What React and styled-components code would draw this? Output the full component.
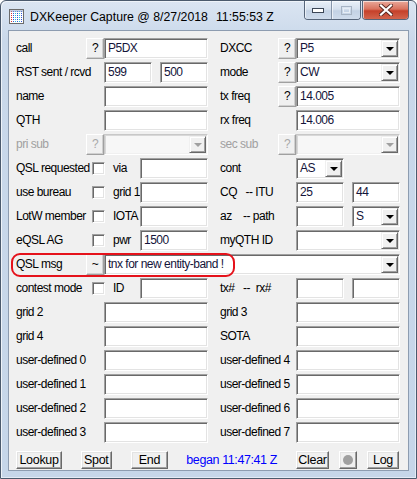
import React from "react";
import styled, { createGlobalStyle } from "styled-components";

const GlobalStyle = createGlobalStyle`
  body {
    margin: 0;
    background: #ffffff;
    font-family: "Liberation Sans", Arial, sans-serif;
  }
`;

const Window = styled.div`
  box-sizing: border-box;
  width: 417px;
  height: 479px;
  border: 1px solid #4b5a6d;
  border-radius: 6px 6px 0 0;
  background: linear-gradient(#dbe5f2, #c9d8ea 40px, #c6d6e9);
  box-shadow: inset 1px 1px #eef3f9, inset -1px -1px #e3ebf5;
  padding: 0 7px 7px;
  display: flex;
  flex-direction: column;
`;

const TitleBar = styled.div`
  height: 29px;
  display: flex;
  align-items: center;
  flex-shrink: 0;
`;

const TitleIcon = styled.svg`
  width: 15px;
  height: 15px;
  margin-left: 1px;
  margin-top: 1px;
  flex-shrink: 0;
`;

const TitleText = styled.span`
  margin-left: 6px;
  font-size: 12.3px;
  color: #000;
  margin-top: 2px;
  white-space: nowrap;
`;

const TitleTime = styled(TitleText)`
  margin-left: 8px;
`;

const Captions = styled.div`
  margin-left: auto;
  align-self: flex-start;
  display: flex;
  gap: 1px;
`;

const CapGroup = styled.div`
  display: flex;
  border: 1px solid #56657a;
  border-top: none;
  border-radius: 0 0 4px 4px;
  overflow: hidden;
`;

const CapBtn = styled.div`
  width: ${(p) => p.$w}px;
  height: 18px;
  display: flex;
  align-items: center;
  justify-content: center;
  background: ${(p) =>
    p.$close
      ? "linear-gradient(#e9a99b, #d9725e 45%, #c5402a 55%, #d2654d)"
      : "linear-gradient(#e9f0f8, #d6e1ee 45%, #c3d2e5 55%, #cfdcec)"};
  box-shadow: inset 1px 1px rgba(255, 255, 255, 0.6);
  & + & {
    border-left: 1px solid #8796aa;
  }
`;

const Client = styled.div`
  flex: 1;
  box-sizing: border-box;
  background: #f0f0f0;
  border: 1px solid #8d9cb0;
  display: flex;
  flex-direction: column;
  font-size: 12px;
  letter-spacing: -0.5px;
  color: #000;
`;

const Form = styled.div`
  display: grid;
  grid-template-columns: 199px 200px;
  grid-auto-rows: 24px;
  padding-top: 5px;
`;

const Cell = styled.div`
  display: flex;
  align-items: center;
  padding-left: ${(p) => p.$pad}px;
  position: relative;
  grid-column: ${(p) => (p.$wide ? "1 / -1" : "auto")};
`;

const Label = styled.span`
  width: ${(p) => p.$w}px;
  flex-shrink: 0;
  white-space: pre;
  color: ${(p) => (p.$disabled ? "#a0a0a0" : "#000")};
  margin-left: ${(p) => p.$ml || 0}px;
`;

const QButton = styled.div`
  box-sizing: border-box;
  width: 18px;
  height: 21px;
  flex-shrink: 0;
  display: flex;
  align-items: center;
  justify-content: center;
  background: #f0f0f0;
  border: 1px solid;
  border-color: #fff #a0a0a0 #a0a0a0 #fff;
  box-shadow: inset -1px -1px #d0d0d0;
  color: ${(p) => (p.$disabled ? "#a8a8a8" : "#000")};
  font-size: 12px;
`;

const Field = styled.div`
  box-sizing: border-box;
  width: ${(p) => p.$w || 104}px;
  height: 21px;
  flex-shrink: 0;
  margin-left: ${(p) => p.$ml || 0}px;
  display: flex;
  align-items: center;
  background: ${(p) => (p.$disabled ? "#f7f7f7" : "#fff")};
  border: 1px solid;
  border-color: ${(p) =>
    p.$disabled ? "#c8c8c8 #fff #fff #c8c8c8" : "#a0a0a0 #fff #fff #a0a0a0"};
  box-shadow: ${(p) =>
    p.$disabled
      ? "inset 1px 1px #d8d8d8, inset -1px -1px #f0f0f0"
      : "inset 1px 1px #696969, inset -1px -1px #e3e3e3"};
  padding: 0 1px 0 3px;
  color: #14143a;
  white-space: nowrap;
  overflow: hidden;
`;

const FieldText = styled.span`
  flex: 1;
`;

const DropBtn = styled.div`
  box-sizing: border-box;
  width: 17px;
  height: 17px;
  flex-shrink: 0;
  display: flex;
  align-items: center;
  justify-content: center;
  background: #f0f0f0;
  border: 1px solid;
  border-color: #f0f0f0 #696969 #696969 #f0f0f0;
  box-shadow: inset 1px 1px #fff, inset -1px -1px #a0a0a0;
  &::after {
    content: "";
    border-left: 4px solid transparent;
    border-right: 4px solid transparent;
    border-top: 4px solid ${(p) => (p.$disabled ? "#a0a0a0" : "#000")};
    margin-top: 1px;
  }
`;

const Check = styled.div`
  box-sizing: border-box;
  width: 13px;
  height: 13px;
  flex-shrink: 0;
  margin-left: 6px;
  background: #fff;
  border: 1px solid;
  border-color: #a0a0a0 #fff #fff #a0a0a0;
  box-shadow: inset 1px 1px #696969, inset -1px -1px #e3e3e3;
`;

const Gap = styled.div`
  width: ${(p) => p.$w}px;
  flex-shrink: 0;
`;

const Highlight = styled.div`
  position: absolute;
  left: 2px;
  top: 1px;
  width: 224px;
  height: 24px;
  box-sizing: border-box;
  border: 2.5px solid #e5121b;
  border-radius: 9px;
  pointer-events: none;
`;

const ButtonBar = styled.div`
  display: flex;
  align-items: center;
  margin-top: 7px;
  padding: 0 9px 0 7px;
  gap: 19px;
`;

const RightGroup = styled.div`
  margin-left: auto;
  display: flex;
  align-items: center;
  gap: 10px;
`;

const Button = styled.div`
  box-sizing: border-box;
  width: ${(p) => p.$w}px;
  height: 18px;
  display: flex;
  align-items: center;
  justify-content: center;
  background: #f0f0f0;
  border: 1px solid;
  border-color: #fff #696969 #696969 #fff;
  box-shadow: inset -1px -1px #a0a0a0, inset 1px 1px #e3e3e3;
  font-size: 12.5px;
  letter-spacing: -0.3px;
`;

const Dot = styled.div`
  width: 10px;
  height: 10px;
  border-radius: 50%;
  background: #a0a0a0;
`;

const Began = styled.span`
  color: #0000ff;
  font-size: 12.5px;
  letter-spacing: -0.4px;
  margin-left: -1px;
  white-space: nowrap;
`;

const Combo = ({ w, value, disabled }) => (
  <Field $w={w} $disabled={disabled} style={{ paddingRight: 1 }}>
    <FieldText>{value}</FieldText>
    <DropBtn $disabled={disabled} />
  </Field>
);

const L = (props) => <Cell $pad={7} {...props} />;
const R = (props) => <Cell $pad={12} {...props} />;

const App = () => {
  return (
    <>
      <GlobalStyle />
      <Window>
        <TitleBar>
          <TitleIcon viewBox="0 0 15 15">
            <rect x="0.5" y="0.5" width="14" height="14" fill="#fff" stroke="#6b6b6b" />
            <g strokeDasharray="1 1">
              <line x1="2.5" y1="2" x2="2.5" y2="14" stroke="#e0302a" />
              <line x1="4.5" y1="2" x2="4.5" y2="14" stroke="#2f56d8" />
              <line x1="6.5" y1="2" x2="6.5" y2="14" stroke="#27c6d8" />
              <line x1="8.5" y1="2" x2="8.5" y2="14" stroke="#2f56d8" />
              <line x1="10.5" y1="2" x2="10.5" y2="14" stroke="#27c6d8" />
              <line x1="12.5" y1="2" x2="12.5" y2="14" stroke="#2f56d8" />
            </g>
            <line x1="1" y1="2" x2="14" y2="2" stroke="#8aa0c8" />
          </TitleIcon>
          <TitleText>DXKeeper Capture @ 8/27/2018</TitleText>
          <TitleTime>11:55:53 Z</TitleTime>
          <Captions>
            <CapGroup>
              <CapBtn $w={26}>
                <svg width="12" height="5" viewBox="0 0 12 5">
                  <rect x="0.5" y="0.5" width="11" height="4" fill="#fff" stroke="#3b4656" />
                </svg>
              </CapBtn>
              <CapBtn $w={28}>
                <svg width="11" height="9" viewBox="0 0 11 9">
                  <rect x="0.5" y="0.5" width="10" height="8" fill="none" stroke="#a7b4c4" />
                  <rect x="2.5" y="2.5" width="6" height="4" fill="none" stroke="#e6edf5" />
                </svg>
              </CapBtn>
            </CapGroup>
            <CapGroup>
              <CapBtn $w={45} $close>
                <svg width="14" height="12" viewBox="0 0 14 12">
                  <path d="M2 1.5 L12 10.5 M12 1.5 L2 10.5" stroke="#5a2a22" strokeWidth="4" strokeLinecap="square" />
                  <path d="M2 1.5 L12 10.5 M12 1.5 L2 10.5" stroke="#fff" strokeWidth="2.2" strokeLinecap="square" />
                </svg>
              </CapBtn>
            </CapGroup>
          </Captions>
        </TitleBar>

        <Client>
          <Form>
            <L>
              <Label $w={70}>call</Label>
              <QButton>?</QButton>
              <Field>P5DX</Field>
            </L>
            <R>
              <Label $w={58}>DXCC</Label>
              <QButton>?</QButton>
              <Combo value="P5" />
            </R>

            <L>
              <Label $w={88}>RST sent / rcvd</Label>
              <Field $w={48}>599</Field>
              <Field $w={48} $ml={8}>500</Field>
            </L>
            <R>
              <Label $w={58}>mode</Label>
              <QButton>?</QButton>
              <Combo value="CW" />
            </R>

            <L>
              <Label $w={88}>name</Label>
              <Field />
            </L>
            <R>
              <Label $w={58}>tx freq</Label>
              <QButton>?</QButton>
              <Field>14.005</Field>
            </R>

            <L>
              <Label $w={88}>QTH</Label>
              <Field />
            </L>
            <R>
              <Label $w={76}>rx freq</Label>
              <Field>14.006</Field>
            </R>

            <L>
              <Label $w={70} $disabled>
                pri sub
              </Label>
              <QButton $disabled>?</QButton>
              <Combo disabled />
            </L>
            <R>
              <Label $w={58} $disabled>
                sec sub
              </Label>
              <QButton $disabled>?</QButton>
              <Combo disabled />
            </R>

            <L>
              <Label $w={70}>QSL requested</Label>
              <Check />
              <Label $w={27} $ml={8}>via</Label>
              <Field $w={68} />
            </L>
            <R>
              <Label $w={76}>cont</Label>
              <Combo w={48} value="AS" />
            </R>

            <L>
              <Label $w={70}>use bureau</Label>
              <Check />
              <Label $w={27} $ml={8}>grid 1</Label>
              <Field $w={68} />
            </L>
            <R>
              <Label $w={76}>{"CQ   -- ITU"}</Label>
              <Field $w={48}>25</Field>
              <Field $w={48} $ml={8}>44</Field>
            </R>

            <L>
              <Label $w={70}>LotW member</Label>
              <Check />
              <Label $w={27} $ml={8}>IOTA</Label>
              <Field $w={68} />
            </L>
            <R>
              <Label $w={76}>{"az    -- path"}</Label>
              <Field $w={48} />
              <Gap $w={8} />
              <Combo w={48} value="S" />
            </R>

            <L>
              <Label $w={70}>eQSL AG</Label>
              <Check />
              <Label $w={27} $ml={8}>pwr</Label>
              <Field $w={68}>1500</Field>
            </L>
            <R>
              <Label $w={76}>myQTH ID</Label>
              <Combo />
            </R>

            <Cell $pad={7} $wide>
              <Label $w={70}>QSL msg</Label>
              <QButton>~</QButton>
              <Combo w={296} value="tnx for new entity-band !" />
              <Highlight />
            </Cell>

            <L>
              <Label $w={70}>contest mode</Label>
              <Check />
              <Label $w={27} $ml={8}>ID</Label>
              <Field $w={68} />
            </L>
            <R>
              <Label $w={76}>{"tx#   --  rx#"}</Label>
              <Field $w={48} />
              <Field $w={48} $ml={8} />
            </R>

            <L>
              <Label $w={88}>grid 2</Label>
              <Field />
            </L>
            <R>
              <Label $w={76}>grid 3</Label>
              <Field />
            </R>

            <L>
              <Label $w={88}>grid 4</Label>
              <Field />
            </L>
            <R>
              <Label $w={76}>SOTA</Label>
              <Field />
            </R>

            {[0, 1, 2, 3].map((n) => (
              <React.Fragment key={n}>
                <L>
                  <Label $w={88}>user-defined {n}</Label>
                  <Field />
                </L>
                <R>
                  <Label $w={76}>user-defined {n + 4}</Label>
                  <Field />
                </R>
              </React.Fragment>
            ))}
          </Form>

          <ButtonBar>
            <Button $w={50}>Lookup</Button>
            <Button $w={33}>Spot</Button>
            <Button $w={41}>End</Button>
            <Began>began 11:47:41 Z</Began>
            <RightGroup>
              <Button $w={33}>Clear</Button>
              <Button $w={18}>
                <Dot />
              </Button>
              <Button $w={32}>Log</Button>
            </RightGroup>
          </ButtonBar>
        </Client>
      </Window>
    </>
  );
};

export default App;
